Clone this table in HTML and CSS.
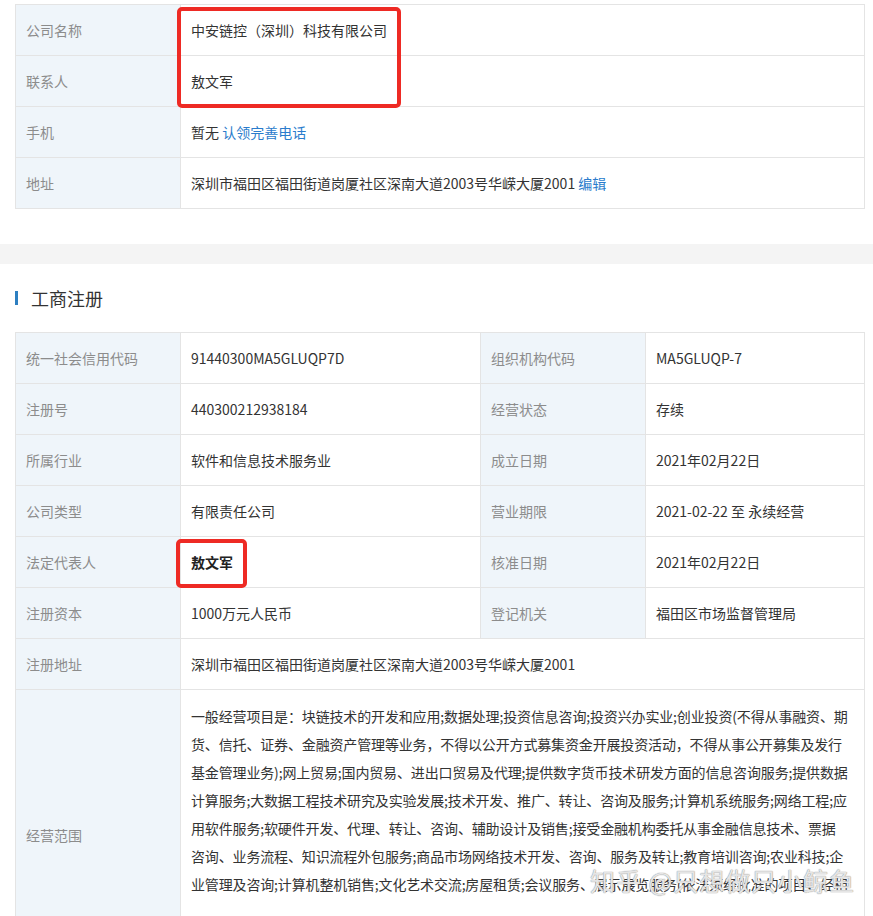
FILE: index.html
```html
<!DOCTYPE html>
<html lang="zh-CN">
<head>
    <meta charset="UTF-8">
    <meta name="viewport" content="width=device-width, initial-scale=1.0">
    <title>企业信息</title>
    <link rel="stylesheet" href="styles.css">
</head>
<body>

<div class="pagina">
    <div class="seccion seccion-contacto">
        <table class="tabla tabla-contacto">
            <colgroup>
                <col class="col-label">
                <col>
            </colgroup>
            <tr>
                <td class="label">公司名称</td>
                <td>中安链控（深圳）科技有限公司</td>
            </tr>
            <tr>
                <td class="label">联系人</td>
                <td>敖文军</td>
            </tr>
            <tr>
                <td class="label">手机</td>
                <td>暂无 <a class="enlace" href="#">认领完善电话</a></td>
            </tr>
            <tr>
                <td class="label">地址</td>
                <td>深圳市福田区福田街道岗厦社区深南大道2003号华嵘大厦2001 <a class="enlace" href="#">编辑</a></td>
            </tr>
        </table>
    </div>

    <div class="separador"></div>

    <div class="seccion">
        <h3 class="titulo">工商注册</h3>

        <table class="tabla tabla-registro">
            <colgroup>
                <col class="col-label">
                <col class="col-valor">
                <col class="col-label">
                <col>
            </colgroup>
            <tr>
                <td class="label">统一社会信用代码</td>
                <td>91440300MA5GLUQP7D</td>
                <td class="label">组织机构代码</td>
                <td>MA5GLUQP-7</td>
            </tr>
            <tr>
                <td class="label">注册号</td>
                <td>440300212938184</td>
                <td class="label">经营状态</td>
                <td>存续</td>
            </tr>
            <tr>
                <td class="label">所属行业</td>
                <td>软件和信息技术服务业</td>
                <td class="label">成立日期</td>
                <td>2021年02月22日</td>
            </tr>
            <tr>
                <td class="label">公司类型</td>
                <td>有限责任公司</td>
                <td class="label">营业期限</td>
                <td>2021-02-22 至 永续经营</td>
            </tr>
            <tr>
                <td class="label">法定代表人</td>
                <td><strong>敖文军</strong></td>
                <td class="label">核准日期</td>
                <td>2021年02月22日</td>
            </tr>
            <tr>
                <td class="label">注册资本</td>
                <td>1000万元人民币</td>
                <td class="label">登记机关</td>
                <td>福田区市场监督管理局</td>
            </tr>
            <tr>
                <td class="label">注册地址</td>
                <td colspan="3">深圳市福田区福田街道岗厦社区深南大道2003号华嵘大厦2001</td>
            </tr>
            <tr>
                <td class="label">经营范围</td>
                <td colspan="3" class="ambito">一般经营项目是：块链技术的开发和应用;数据处理;投资信息咨询;投资兴办实业;创业投资(不得从事融资、期<br>货、信托、证券、金融资产管理等业务，不得以公开方式募集资金开展投资活动，不得从事公开募集及发行<br>基金管理业务);网上贸易;国内贸易、进出口贸易及代理;提供数字货币技术研发方面的信息咨询服务;提供数据<br>计算服务;大数据工程技术研究及实验发展;技术开发、推广、转让、咨询及服务;计算机系统服务;网络工程;应<br>用软件服务;软硬件开发、代理、转让、咨询、辅助设计及销售;接受金融机构委托从事金融信息技术、票据<br>咨询、业务流程、知识流程外包服务;商品市场网络技术开发、咨询、服务及转让;教育培训咨询;农业科技;企<br>业管理及咨询;计算机整机销售;文化艺术交流;房屋租赁;会议服务、展示展览服务(依法须经批准的项目，经相</td>
            </tr>
        </table>
    </div>

    <div class="marca marca-1"></div>
    <div class="marca marca-2"></div>
    <div class="agua">知乎 @只想做只小鲸鱼</div>
</div>

</body>
</html>
```

FILE: styles.css
```css
body {
    font-family: "Noto Sans CJK SC", "Noto Sans", sans-serif;
    margin: 0;
    padding: 0;
    background-color: white;
    color: #333;
    font-size: 14px;
}
.pagina {
    position: relative;
    overflow: hidden;
}
.seccion {
    padding: 0 8px 0 15px;
}
.seccion-contacto {
    padding-top: 4px;
    padding-bottom: 35px;
}
.separador {
    height: 20px;
    background-color: #f4f4f4;
}
.titulo {
    margin: 0;
    padding: 22px 0 22px 0;
    font-size: 18px;
    font-weight: normal;
    line-height: 24px;
    color: #333;
    display: flex;
    align-items: center;
    gap: 13px;
}
.titulo::before {
    content: "";
    width: 3px;
    height: 14px;
    background-color: #2d7fc1;
}
.tabla {
    width: 850px;
    border-collapse: collapse;
    table-layout: fixed;
}
.tabla td {
    border: 1px solid #e4e4e4;
    height: 51px;
    padding: 0 10px;
    line-height: 20px;
    vertical-align: middle;
    box-sizing: border-box;
}
.col-label {
    width: 165px;
}
.col-valor {
    width: 300px;
}
.label {
    background-color: #eff5fa;
    color: #8c8c8c;
}
.enlace {
    color: #2a7ccc;
    text-decoration: none;
}
strong {
    font-weight: bold;
    color: #222;
}
.tabla td.ambito {
    height: 290px;
    line-height: 28px;
    padding: 12px 0 0 10px;
    vertical-align: top;
    white-space: nowrap;
    letter-spacing: -0.15px;
}
.marca {
    position: absolute;
    border: 4px solid #ee2a24;
    border-radius: 5px;
    box-sizing: border-box;
}
.marca-1 {
    left: 177px;
    top: 7px;
    width: 224px;
    height: 101px;
}
.marca-2 {
    left: 176px;
    top: 539px;
    width: 71px;
    height: 49px;
}
.agua {
    position: absolute;
    left: 590px;
    top: 862px;
    font-size: 25px;
    letter-spacing: 1px;
    color: rgba(255, 255, 255, 0.75);
    text-shadow: 0 0 1px #999, 0 0 1px #999;
}
```
